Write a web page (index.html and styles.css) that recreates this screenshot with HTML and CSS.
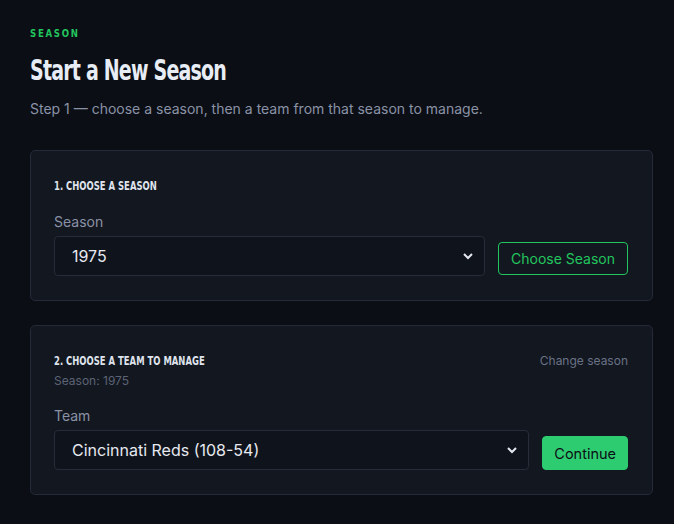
FILE: index.html
```html
<!DOCTYPE html>
<html lang="en">
<head>
  <meta charset="UTF-8">
  <title>Start a New Season</title>
  <link rel="stylesheet" href="styles.css">
</head>
<body>
  <main class="page">
    <div class="eyebrow"><span class="narrow">SEASON</span></div>
    <h1 class="title"><span class="narrow">Start a New Season</span></h1>
    <p class="lead">Step 1 — choose a season, then a team from that season to manage.</p>

    <section class="card">
      <h2 class="card-title"><span class="narrow">1. Choose a season</span></h2>
      <label class="field-label" for="season">Season</label>
      <div class="row">
        <select id="season" class="select">
          <option>1975</option>
        </select>
        <button class="btn btn-outline">Choose Season</button>
      </div>
    </section>

    <section class="card">
      <div class="card-head">
        <div>
          <h2 class="card-title"><span class="narrow">2. Choose a team to manage</span></h2>
          <div class="card-sub">Season: 1975</div>
        </div>
        <a class="link" href="#">Change season</a>
      </div>
      <label class="field-label" for="team">Team</label>
      <div class="row">
        <select id="team" class="select">
          <option>Cincinnati Reds (108-54)</option>
        </select>
        <button class="btn btn-solid">Continue</button>
      </div>
    </section>
  </main>
</body>
</html>
```

FILE: styles.css
```css
body {
  margin: 0;
  background: #0b0e15;
  color: #e6e9f0;
  font-family: Inter, "Noto Sans", sans-serif;
}
.page {
  padding: 27px 21px 30px 30px;
}
/* display face is condensed; squeeze DejaVu to match */
.narrow {
  display: inline-block;
  transform-origin: left center;
  white-space: nowrap;
}
.eyebrow {
  font-family: "DejaVu Sans", sans-serif;
  font-weight: bold;
  font-size: 11px;
  letter-spacing: 2.2px;
  color: #22c55e;
  line-height: 14px;
}
.eyebrow .narrow {
  transform: scaleX(0.78);
}
.title {
  margin: 14px 0 0;
  font-family: "DejaVu Sans", sans-serif;
  font-weight: bold;
  font-size: 28px;
  line-height: 32px;
  letter-spacing: -1.2px;
  color: #e8ecf4;
}
.title .narrow {
  transform: scaleX(0.68);
}
.lead {
  margin: 12px 0 0;
  font-size: 14px;
  line-height: 20px;
  color: #8a92a6;
}
.card {
  margin-top: 31px;
  background: #131720;
  border: 1px solid #242a37;
  border-radius: 5px;
  padding: 26px 24px 24px 23px;
}
.card + .card {
  margin-top: 24px;
}
.card-head {
  display: flex;
  justify-content: space-between;
  align-items: flex-start;
}
.card-title {
  margin: 0;
  font-family: "DejaVu Sans", sans-serif;
  font-weight: bold;
  font-size: 12px;
  line-height: 18px;
  text-transform: uppercase;
  color: #dfe3ec;
}
.card-title .narrow {
  transform: scaleX(0.705);
}
.card-sub {
  margin-top: 3px;
  font-size: 12px;
  line-height: 16px;
  color: #5c6375;
}
.link {
  font-size: 12px;
  line-height: 18px;
  color: #6a7285;
  text-decoration: none;
}
.field-label {
  display: block;
  margin-top: 17px;
  font-size: 14px;
  line-height: 20px;
  color: #8a92a6;
}
.row {
  display: flex;
  align-items: flex-end;
  gap: 13px;
  margin-top: 4px;
}
.select {
  flex: 1;
  height: 40px;
  padding: 0 10px 0 17px;
  background: #0f131b;
  border: 1px solid #262c39;
  border-radius: 4px;
  color: #e6e9f0;
  font-family: Inter, sans-serif;
  font-size: 16px;
  appearance: none;
  background-image: url("data:image/svg+xml,%3Csvg xmlns='http://www.w3.org/2000/svg' width='12' height='8' viewBox='0 0 12 8'%3E%3Cpath d='M2 2l4 4 4-4' fill='none' stroke='%23e6e9f0' stroke-width='2'/%3E%3C/svg%3E");
  background-repeat: no-repeat;
  background-position: right 10px center;
}
.btn {
  height: 33px;
  margin-bottom: 1px;
  padding: 0 12px;
  border-radius: 4px;
  font-family: Inter, sans-serif;
  font-size: 14px;
  white-space: nowrap;
}
.btn-outline {
  background: transparent;
  border: 1px solid #22c55e;
  color: #22c55e;
}
.btn-solid {
  height: 34px;
  margin-bottom: 0;
  padding: 0 11px;
  background: #2ecc71;
  border: 1px solid #2ecc71;
  color: #0b0e15;
  font-size: 14.5px;
}
```
